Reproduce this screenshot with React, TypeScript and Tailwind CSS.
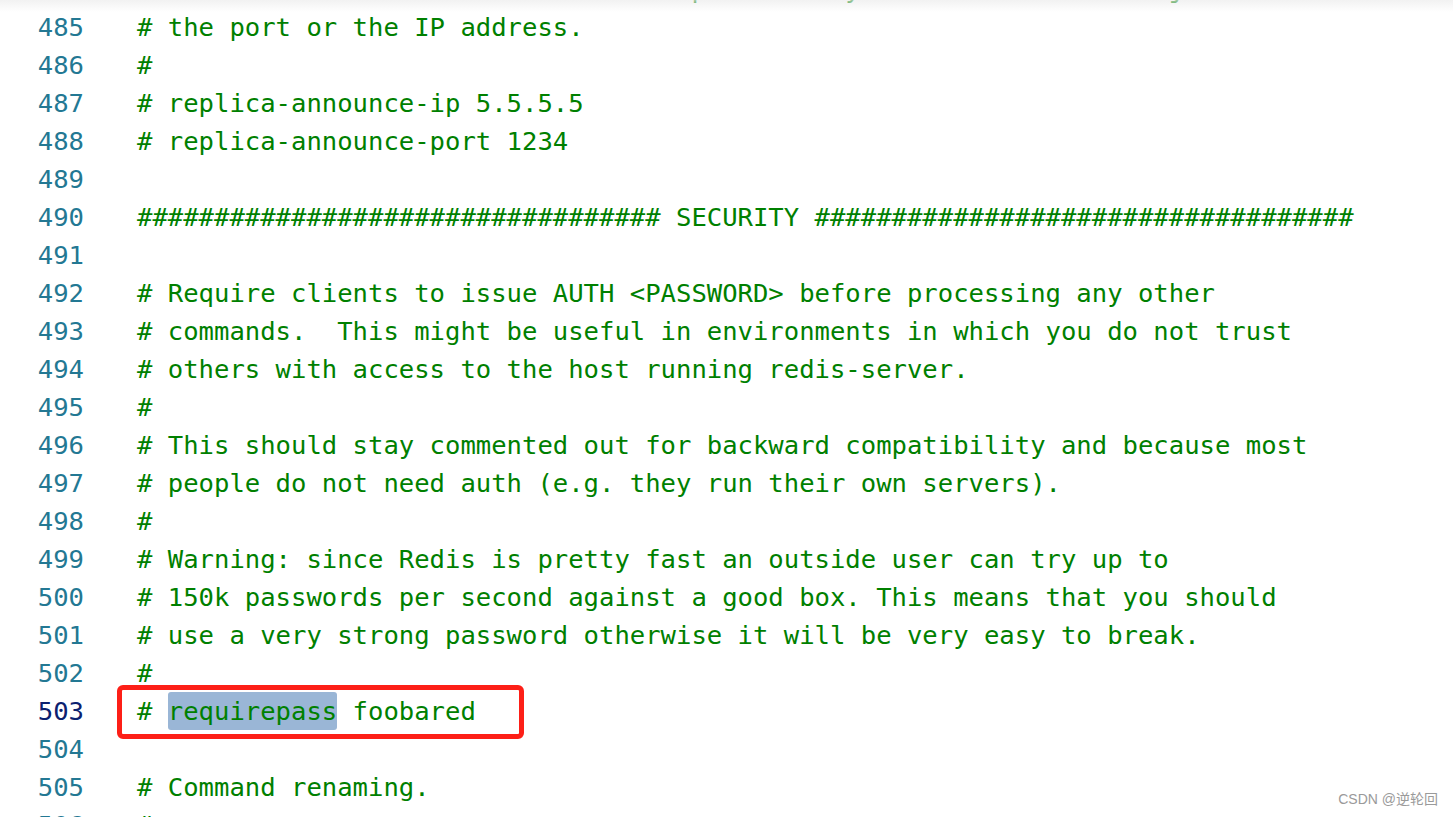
import React from 'react';

type Line = { n: number; text: string };

const lines: Line[] = [
  { n: 484, text: '# There is no need to use both the options if you need to override just' },
  { n: 485, text: '# the port or the IP address.' },
  { n: 486, text: '#' },
  { n: 487, text: '# replica-announce-ip 5.5.5.5' },
  { n: 488, text: '# replica-announce-port 1234' },
  { n: 489, text: '' },
  { n: 490, text: '################################## SECURITY ###################################' },
  { n: 491, text: '' },
  { n: 492, text: '# Require clients to issue AUTH <PASSWORD> before processing any other' },
  { n: 493, text: '# commands.  This might be useful in environments in which you do not trust' },
  { n: 494, text: '# others with access to the host running redis-server.' },
  { n: 495, text: '#' },
  { n: 496, text: '# This should stay commented out for backward compatibility and because most' },
  { n: 497, text: '# people do not need auth (e.g. they run their own servers).' },
  { n: 498, text: '#' },
  { n: 499, text: '# Warning: since Redis is pretty fast an outside user can try up to' },
  { n: 500, text: '# 150k passwords per second against a good box. This means that you should' },
  { n: 501, text: '# use a very strong password otherwise it will be very easy to break.' },
  { n: 502, text: '#' },
  { n: 503, text: '' },
  { n: 504, text: '' },
  { n: 505, text: '# Command renaming.' },
  { n: 506, text: '#' },
];

const ACTIVE = 503;

const App: React.FC = () => {
  return (
    <div
      className="relative h-[817px] w-full overflow-hidden bg-white"
      style={{ fontFamily: '"DejaVu Sans Mono", "Liberation Mono", monospace' }}
    >
      <div className="-mt-[30px] flex flex-col text-[25.58px] leading-[38px]">
        {lines.map((line) => (
          <div key={line.n} className="flex h-[38px] items-center">
            <div
              className={`w-[84px] shrink-0 text-right ${
                line.n === ACTIVE ? 'text-[#0b216f]' : 'text-[#237893]'
              }`}
            >
              {line.n}
            </div>
            <div className="relative pl-[53px] whitespace-pre text-[#008000]">
              {line.n === ACTIVE ? (
                <>
                  {'# '}
                  <span className="inline-block h-[38px] rounded-[3px] bg-[#9ab6d6] align-top">requirepass</span>
                  {' foobared'}
                  {/* red annotation box */}
                  <span className="pointer-events-none absolute left-[33px] top-[-7px] h-[54px] w-[407px] rounded-[6px] border-[5px] border-[#fd1f17]" />
                </>
              ) : (
                line.text
              )}
            </div>
          </div>
        ))}
      </div>

      {/* faint shadow at the top edge */}
      <div className="pointer-events-none absolute inset-x-0 top-0 h-[12px] bg-gradient-to-b from-[#ececec] to-transparent opacity-70" />

      {/* watermark */}
      <div
        className="absolute bottom-[7px] right-[15px] text-[14px] text-[#9a9a9a]"
        style={{ fontFamily: '"Liberation Sans", "Noto Sans CJK SC", sans-serif' }}
      >
        CSDN @逆轮回
      </div>
    </div>
  );
};

export default App;
